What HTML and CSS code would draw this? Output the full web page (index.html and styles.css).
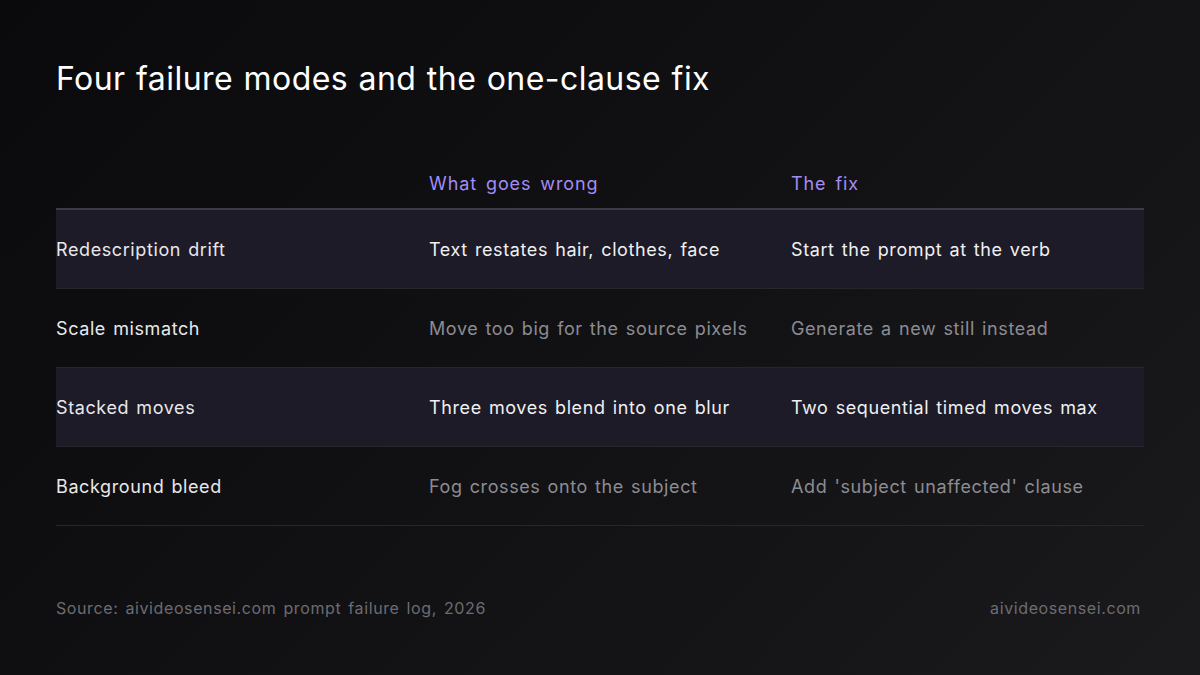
FILE: index.html
```html
<!DOCTYPE html>
<html>
<head>
  <title>Four failure modes</title>
  <link rel="stylesheet" href="styles.css">
</head>
<body>
  <div class="slide">
    <h1>Four failure modes and the one-clause fix</h1>

    <div class="table">
      <div class="row head">
        <div></div>
        <div>What goes wrong</div>
        <div>The fix</div>
      </div>
      <div class="row shade">
        <div>Redescription drift</div>
        <div>Text restates hair, clothes, face</div>
        <div>Start the prompt at the verb</div>
      </div>
      <div class="row">
        <div>Scale mismatch</div>
        <div>Move too big for the source pixels</div>
        <div>Generate a new still instead</div>
      </div>
      <div class="row shade">
        <div>Stacked moves</div>
        <div>Three moves blend into one blur</div>
        <div>Two sequential timed moves max</div>
      </div>
      <div class="row">
        <div>Background bleed</div>
        <div>Fog crosses onto the subject</div>
        <div>Add 'subject unaffected' clause</div>
      </div>
    </div>

    <div class="footer">
      <span>Source: aivideosensei.com prompt failure log, 2026</span>
      <span>aivideosensei.com</span>
    </div>
  </div>
</body>
</html>
```

FILE: styles.css
```css
html, body {
  margin: 0;
  height: 100%;
}
body {
  font-family: Inter, "Noto Sans", sans-serif;
  background: linear-gradient(135deg, #0a0a0c 0%, #121214 55%, #1a1a1d 100%);
  color: #ececee;
}
.slide {
  width: 1200px;
  height: 675px;
  box-sizing: border-box;
  padding: 58px 56px 0 56px;
  display: flex;
  flex-direction: column;
}
h1 {
  margin: 0;
  font-size: 32px;
  font-weight: 400;
  line-height: 42px;
  color: #ffffff;
  letter-spacing: 0.45px;
  word-spacing: 1px;
}
.table {
  margin-top: 68px;
}
.row {
  display: grid;
  grid-template-columns: 373px 362px 1fr;
  align-items: center;
  height: 78px;
  border-bottom: 1px solid #26262b;
  font-size: 18px;
  letter-spacing: 0.6px;
  word-spacing: 1.5px;
}
.row > div:first-child {
  color: #e8e8ea;
}
.row > div:nth-child(n+2) {
  color: #8c8c92;
}
.row.shade {
  background: #1c1b27;
}
.row.shade > div:nth-child(n+2) {
  color: #f0f0f2;
}
.row.head {
  height: 35px;
  padding-top: 5px;
  align-items: start;
  border-bottom: 2px solid #3c3c44;
  letter-spacing: 0.9px;
  word-spacing: 3px;
}
.row.head > div {
  color: #a38cf5;
}
.footer {
  margin-top: auto;
  margin-bottom: 57px;
  display: flex;
  justify-content: space-between;
  font-size: 16px;
  color: #6c6c72;
  letter-spacing: 0.6px;
  word-spacing: 2px;
  padding-right: 3px;
}
```
